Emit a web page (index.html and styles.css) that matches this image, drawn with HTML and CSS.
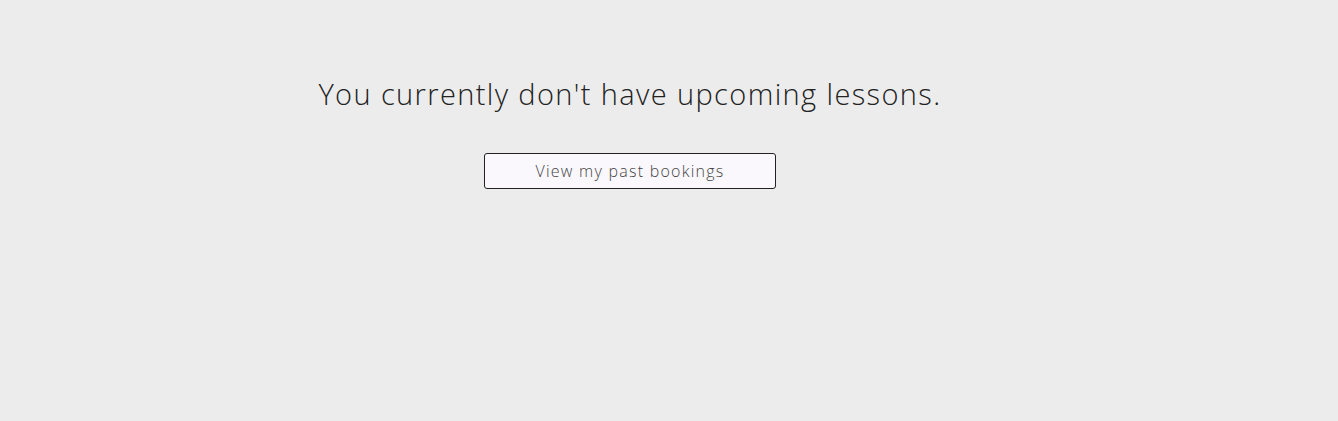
FILE: index.html
```html
<!DOCTYPE html>
<html>
<head>
<meta charset="utf-8">
<link rel="stylesheet" href="styles.css">
</head>
<body>
<main class="page">
  <section class="empty">
    <h1 class="empty-title">You currently don't have upcoming lessons.</h1>
    <button class="past-btn" type="button">View my past bookings</button>
  </section>
</main>
</body>
</html>
```
FILE: styles.css
```css
html, body {
  margin: 0;
  padding: 0;
  background: #ececec;
  height: 100%;
}
body {
  font-family: "Open Sans", "Noto Sans", sans-serif;
  color: #222;
}
.page {
  width: 1260px;
  padding-top: 74px;
}
.empty {
  display: flex;
  flex-direction: column;
  align-items: center;
}
.empty-title {
  margin: 0;
  font-size: 29px;
  font-weight: 300;
  line-height: 40px;
  letter-spacing: 1.38px;
  color: #222;
}
.past-btn {
  margin-top: 39px;
  width: 292px;
  height: 36px;
  border: 1px solid #222;
  border-radius: 3px;
  background: #faf8fd;
  font-family: "Open Sans", "Noto Sans", sans-serif;
  font-weight: 300;
  font-size: 16px;
  letter-spacing: 1.25px;
  color: #444;
  padding: 0;
}
```
